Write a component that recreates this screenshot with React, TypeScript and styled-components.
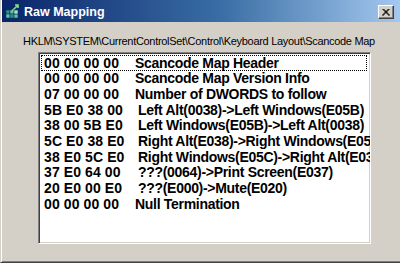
import React from 'react';
import styled, { createGlobalStyle } from 'styled-components';

const entries = [
  { hex: '00 00 00 00', desc: 'Scancode Map Header', indent: false },
  { hex: '00 00 00 00', desc: 'Scancode Map Version Info', indent: false },
  { hex: '07 00 00 00', desc: 'Number of DWORDS to follow', indent: false },
  { hex: '5B E0 38 00', desc: 'Left Alt(0038)->Left Windows(E05B)', indent: true },
  { hex: '38 00 5B E0', desc: 'Left Windows(E05B)->Left Alt(0038)', indent: true },
  { hex: '5C E0 38 E0', desc: 'Right Alt(E038)->Right Windows(E05C)', indent: true },
  { hex: '38 E0 5C E0', desc: 'Right Windows(E05C)->Right Alt(E038)', indent: true },
  { hex: '37 E0 64 00', desc: '???(0064)->Print Screen(E037)', indent: true },
  { hex: '20 E0 00 E0', desc: '???(E000)->Mute(E020)', indent: true },
  { hex: '00 00 00 00', desc: 'Null Termination', indent: false },
];

const GlobalStyle = createGlobalStyle`
  html, body {
    margin: 0;
    padding: 0;
    overflow: hidden;
    background: #d4d0c8;
  }
`;

const Window = styled.div`
  width: 404px;
  height: 263px;
  box-sizing: border-box;
  display: flex;
  flex-direction: column;
  background: #d4d0c8;
  border-left: 1px solid #d4d0c8;
  border-bottom: 1px solid #404040;
  box-shadow: inset 1px 0 0 #ffffff, inset 0 -1px 0 #808080;
  font-family: 'Liberation Sans', Arial, sans-serif;
`;

const TitleBar = styled.div`
  height: 22px;
  box-sizing: border-box;
  margin: 0 1px;
  display: flex;
  align-items: center;
  padding: 2px 3px 0 3px;
  background: linear-gradient(90deg, #0a246a 0%, #3a6ea5 55%, #a6caf0 100%);
  color: #ffffff;
`;

const TitleText = styled.span`
  margin-left: 3px;
  font-weight: bold;
  font-size: 12.5px;
  flex: 1;
`;

const CloseButton = styled.div`
  width: 16px;
  height: 14px;
  box-sizing: border-box;
  margin-right: 6px;
  display: flex;
  align-items: center;
  justify-content: center;
  background: #d4d0c8;
  border-top: 1px solid #ffffff;
  border-left: 1px solid #ffffff;
  border-right: 1px solid #404040;
  border-bottom: 1px solid #404040;
  box-shadow: inset -1px -1px 0 #808080;
`;

const Body = styled.div`
  flex: 1;
  display: flex;
  flex-direction: column;
  padding: 13px 0 17px 37px;
`;

const PathLabel = styled.div`
  font-size: 11px;
  letter-spacing: -0.3px;
  color: #000000;
  margin-left: -15px;
  white-space: nowrap;
  height: 17px;
`;

const ListBox = styled.div`
  width: 333px;
  height: 192px;
  box-sizing: border-box;
  background: #ffffff;
  border-top: 1px solid #808080;
  border-left: 1px solid #808080;
  border-right: 1px solid #ffffff;
  border-bottom: 1px solid #ffffff;
  box-shadow: inset 1px 1px 0 #404040, inset -1px -1px 0 #d4d0c8;
  padding: 2px 3px 2px 2px;
  overflow: hidden;
`;

const Row = styled.div<{ focused?: boolean }>`
  height: 15.67px;
  display: flex;
  align-items: center;
  white-space: nowrap;
  box-sizing: border-box;
  outline: ${({ focused }) => (focused ? '1px dotted #000000' : 'none')};
  outline-offset: -1px;
  font-size: 14px;
  font-weight: bold;
  color: #000000;
`;

const HexCell = styled.span`
  width: 91px;
  padding-left: 3px;
  flex-shrink: 0;
  letter-spacing: 0.1px;
`;

const DescCell = styled.span<{ indent?: boolean }>`
  padding-left: ${({ indent }) => (indent ? '3px' : '0')};
  letter-spacing: -0.3px;
`;

const AppIcon = () => (
  <svg width="16" height="16" viewBox="0 0 16 16">
    <rect x="1" y="6" width="4" height="4" fill="#2f8f8f" stroke="#0f3f3f" strokeWidth="0.6" />
    <rect x="5" y="6" width="4" height="4" fill="#5fbfbf" stroke="#0f3f3f" strokeWidth="0.6" />
    <rect x="1" y="10" width="4" height="4" fill="#5fbfbf" stroke="#0f3f3f" strokeWidth="0.6" />
    <rect x="5" y="10" width="4" height="4" fill="#2f8f8f" stroke="#0f3f3f" strokeWidth="0.6" />
    <rect x="9" y="10" width="4" height="4" fill="#5fbfbf" stroke="#0f3f3f" strokeWidth="0.6" />
    <path d="M7 7 L13 1 M10 1 L13 1 L13 4" stroke="#7fe07f" strokeWidth="1.6" fill="none" />
    <rect x="9" y="6" width="4" height="4" fill="#9fdfdf" stroke="#0f3f3f" strokeWidth="0.6" />
  </svg>
);

const CloseGlyph = () => (
  <svg width="8" height="7" viewBox="0 0 8 7">
    <path d="M0.5 0 L7.5 7 M1.5 0 L7.5 6 M7.5 0 L0.5 7 M6.5 0 L0.5 6" stroke="#000000" strokeWidth="1" />
  </svg>
);

const App = () => {
  return (
    <>
      <GlobalStyle />
      <Window>
        <TitleBar>
          <AppIcon />
          <TitleText>Raw Mapping</TitleText>
          <CloseButton>
            <CloseGlyph />
          </CloseButton>
        </TitleBar>
        <Body>
          <PathLabel>HKLM\SYSTEM\CurrentControlSet\Control\Keyboard Layout\Scancode Map</PathLabel>
          <ListBox>
            {entries.map((entry, i) => (
              <Row key={i} focused={i === 0}>
                <HexCell>{entry.hex}</HexCell>
                <DescCell indent={entry.indent}>{entry.desc}</DescCell>
              </Row>
            ))}
          </ListBox>
        </Body>
      </Window>
    </>
  );
};

export default App;
